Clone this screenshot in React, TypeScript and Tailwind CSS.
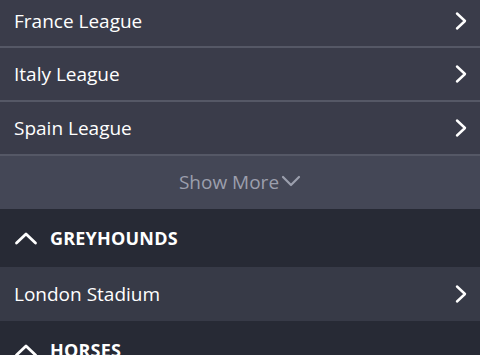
import React from "react";

const leagues = ["France League", "Italy League", "Spain League"];

function ChevronRight() {
  return (
    <svg width="14" height="20" viewBox="0 0 14 20" fill="none" className="shrink-0">
      <path d="M3 2.5L11 10L3 17.5" stroke="white" strokeWidth="2.4" strokeLinecap="round" strokeLinejoin="round" />
    </svg>
  );
}

function ChevronUp() {
  return (
    <svg width="24" height="14" viewBox="0 0 24 14" fill="none" className="shrink-0">
      <path d="M2.5 12L12 3L21.5 12" stroke="white" strokeWidth="2.8" strokeLinecap="round" strokeLinejoin="round" />
    </svg>
  );
}

export default function App() {
  return (
    <div className="w-[480px] h-[355px] overflow-hidden bg-[#3a3c4a]" style={{ fontFamily: '"Open Sans", sans-serif' }}>
      <div className="flex flex-col">
        {leagues.map((l, i) => (
          <div key={l}>
            <div className={`flex items-center justify-between pl-[14px] pr-[12px] bg-[#3a3c4a] ${i === 0 ? "h-[46px] pb-[4px]" : "h-[52px]"}`}>
              <span className="text-[19px] text-white">{l}</span>
              <ChevronRight />
            </div>
            <div className="h-[2px] bg-[#555866]" />
          </div>
        ))}
        <div className="flex items-center justify-center h-[53px] bg-[#444756]">
          <span className="text-[19px] text-[#9c9fad]">Show More</span>
          <svg width="20" height="12" viewBox="0 0 20 12" fill="none" className="ml-[2px] -mt-[4px]">
            <path d="M2 2L10 10L18 2" stroke="#9c9fad" strokeWidth="2.2" strokeLinecap="round" strokeLinejoin="round" />
          </svg>
        </div>
        <div className="flex items-center gap-[12px] h-[58px] pl-[14px] bg-[#272a35]">
          <ChevronUp />
          <span className="text-[18px] font-bold text-white tracking-[0.2px]">GREYHOUNDS</span>
        </div>
        <div className="flex items-center justify-between h-[54px] pl-[14px] pr-[12px] bg-[#373a47]">
          <span className="text-[19px] text-white">London Stadium</span>
          <ChevronRight />
        </div>
        <div className="flex items-center gap-[12px] h-[58px] pl-[14px] bg-[#272a35]">
          <ChevronUp />
          <span className="text-[18px] font-bold text-white tracking-[0.2px]">HORSES</span>
        </div>
      </div>
    </div>
  );
}
